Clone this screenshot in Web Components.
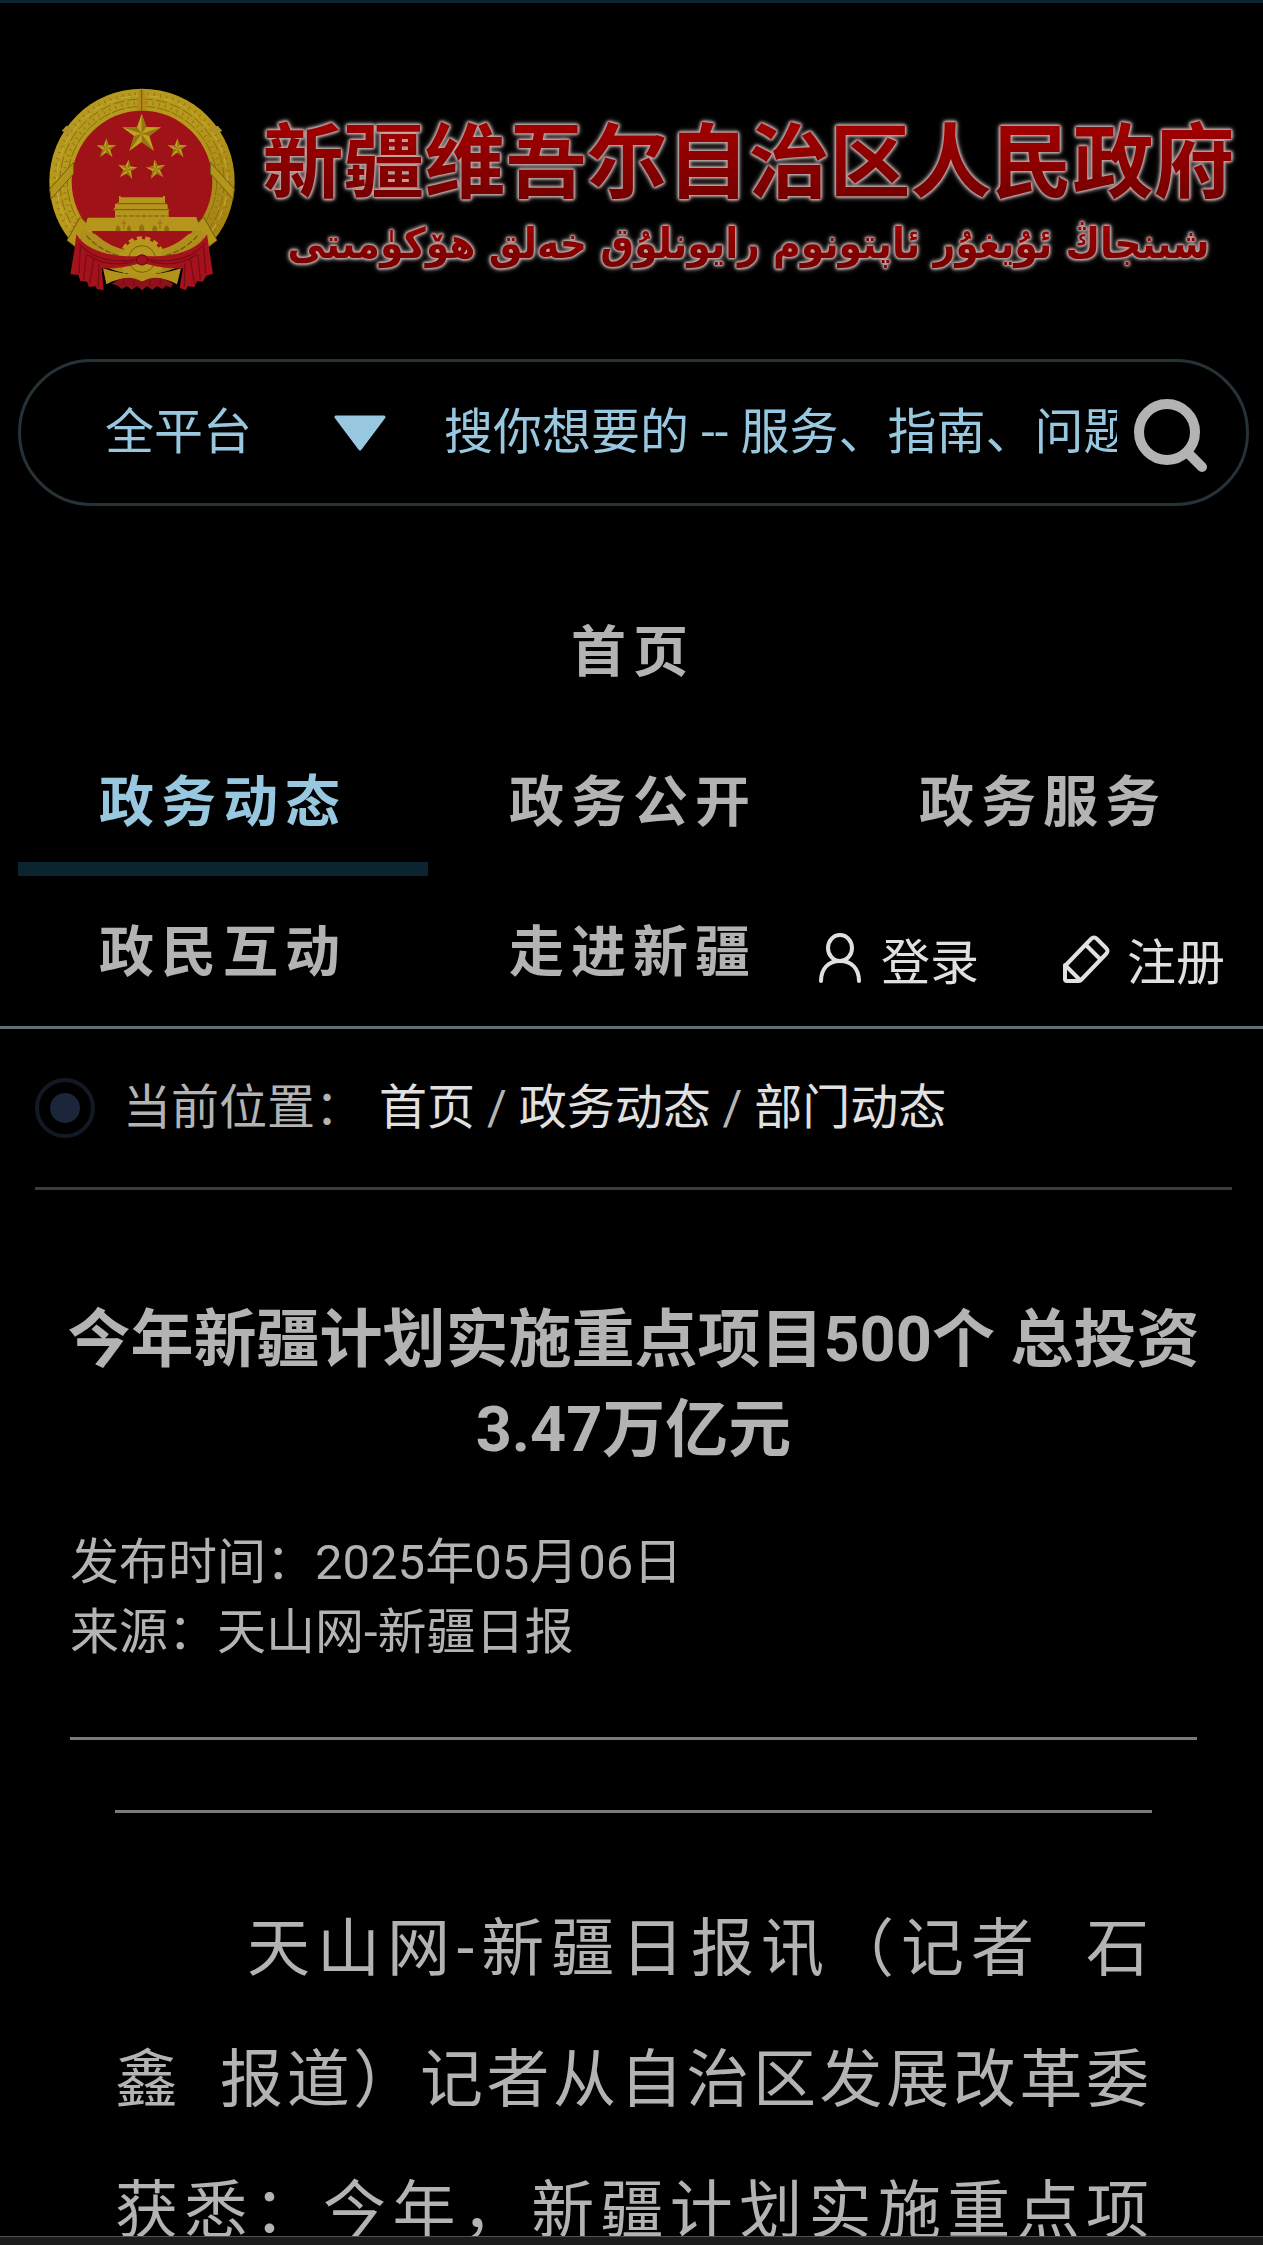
<!DOCTYPE html>
<html lang="zh-CN">
<head>
<meta charset="UTF-8">
<meta name="viewport" content="width=device-width, initial-scale=1">
<title>今年新疆计划实施重点项目500个 总投资3.47万亿元</title>
<style>
  body {
    margin: 0;
    background: #000;
    color: #b3b3b3;
    font-family: Roboto, "Noto Sans CJK SC", sans-serif;
    font-size: 49px;
  }
</style>
</head>
<body>
<portal-page>
  <site-header slot="header"></site-header>
  <site-search slot="header"></site-search>
  <site-nav slot="header">
    <nav-item wide>首页</nav-item>
    <nav-item active>政务动态</nav-item>
    <nav-item>政务公开</nav-item>
    <nav-item>政务服务</nav-item>
    <nav-item>政民互动</nav-item>
    <nav-item>走进新疆</nav-item>
    <user-links></user-links>
  </site-nav>
  <bread-crumb slot="header"></bread-crumb>
  <news-article>
    <span slot="title">今年新疆计划实施重点项目500个 总投资3.47万亿元</span>
    <span slot="date">发布时间：2025年05月06日</span>
    <span slot="source">来源：天山网-新疆日报</span>
    <span slot="body">天山网-新疆日报讯（记者&nbsp;&nbsp;石鑫&nbsp;&nbsp;报道）记者从自治区发展改革委获悉：今年，新疆计划实施重点项</span>
  </news-article>
</portal-page>

<script>
class PortalPage extends HTMLElement {
  connectedCallback() {
    this.attachShadow({ mode: 'open' });
    this.shadowRoot.innerHTML = `
      <style>
        :host {
          display: flex;
          flex-direction: column;
          height: 100vh;
          box-sizing: border-box;
          border-top: 3px solid #0c2630;
        }
        header { flex: none; }
        main {
          flex: 1;
          min-height: 0;
          overflow: hidden;
        }
        .toolbar {
          flex: none;
          height: 8px;
          background: #1c1c1c;
          border-top: 1px solid #505050;
        }
      </style>
      <header><slot name="header"></slot></header>
      <main><slot></slot></main>
      <div class="toolbar"></div>
    `;
  }
}

class SiteHeader extends HTMLElement {
  connectedCallback() {
    this.attachShadow({ mode: 'open' });
    this.shadowRoot.innerHTML = `
      <style>
        :host { display: block; }
        a {
          display: flex;
          align-items: center;
          gap: 25px;
          padding: 84px 28px 67px 47px;
          text-decoration: none;
        }
        svg { flex: none; width: 190px; height: 205px; }
        .names { flex: 1; padding-top: 18px; text-align: center; white-space: nowrap; }
        .zh, .ug {
          display: block;
          color: transparent;
          background-clip: text;
          -webkit-background-clip: text;
          filter: drop-shadow(0 0 1px #c8b0b0) drop-shadow(0 0 1px #b8a2a2) drop-shadow(0 0 1px #a89696) drop-shadow(0 0 2px #807676);
        }
        .zh {
          font-size: 81px;
          font-weight: 700;
          line-height: 90px;
          background-image: linear-gradient(#a00000 10%, #740000 90%);
        }
        .ug {
          font-family: "DejaVu Sans Condensed", "DejaVu Sans", sans-serif;
          font-size: 42px;
          font-weight: 700;
          line-height: 70px;
          background-image: linear-gradient(#a00000 20%, #780000 80%);
        }
      </style>
      <a href="#" aria-label="新疆维吾尔自治区人民政府">
        <svg viewBox="50 50 570 615" aria-hidden="true">
          <defs>
            <linearGradient id="gold" x1="0" y1="0" x2="1" y2="1">
              <stop offset="0" stop-color="#b39a20"/>
              <stop offset=".5" stop-color="#b8981a"/>
              <stop offset="1" stop-color="#9c7a10"/>
            </linearGradient>
            <polygon id="star" points="0,-60 14,-20 58,-19 23,7 37,52 0,25 -37,52 -23,7 -58,-19 -14,-20"/>
            <path id="facets" d="M0 0V-60L14-20ZM0 0 58-19 23 7ZM0 0 37 52 0 25ZM0 0-37 52-23 7ZM0 0-58-19-14-20Z"/>
          </defs>
          <!-- wreath -->
          <ellipse cx="335" cy="334" rx="278" ry="279" fill="url(#gold)"/>
          <g fill="none" stroke="#8a6d10" stroke-width="3">
            <ellipse cx="335" cy="334" rx="246" ry="248" stroke-dasharray="34 9"/>
            <ellipse cx="335" cy="334" rx="224" ry="226" stroke-dasharray="40 6"/>
          </g>
          <g fill="none" stroke="#947614" stroke-width="10" stroke-dasharray="3 16">
            <ellipse cx="335" cy="334" rx="262" ry="264"/>
            <ellipse cx="335" cy="334" rx="234" ry="237"/>
          </g>
          <g fill="none" stroke="#cbb038" stroke-width="3" stroke-dasharray="30 14">
            <ellipse cx="335" cy="334" rx="256" ry="258"/>
          </g>
          <path d="M326 58 318 124H352L342 58Z" fill="#b28a18"/>
          <path d="M334 58V122" stroke="#75570c" stroke-width="3"/>
          <path d="M94 182 108 166 128 172 118 190ZM576 182 562 166 542 172 552 190Z" fill="#b0922a"/>
          <!-- red field -->
          <ellipse cx="335" cy="334" rx="211" ry="213" fill="#9f1218"/>
          <!-- ties over the wreath -->
          <path d="M58 356 130 276V310L62 386ZM612 356 540 276V310L608 386Z" fill="#b39619" stroke="#715a0c" stroke-width="3"/>
          <path d="M110 510 150 440 178 468 136 530ZM560 510 520 440 492 468 534 530Z" fill="#b39619" stroke="#715a0c" stroke-width="3"/>
          <!-- stars -->
          <g fill="#c0a21c">
            <use href="#star" x="334" y="190"/>
            <use href="#star" transform="translate(228 234) scale(.5)"/>
            <use href="#star" transform="translate(441 234) scale(.5)"/>
            <use href="#star" transform="translate(291 297) rotate(8) scale(.5)"/>
            <use href="#star" transform="translate(377 297) rotate(-8) scale(.5)"/>
          </g>
          <g fill="#937414">
            <use href="#facets" x="334" y="190"/>
            <use href="#facets" transform="translate(228 234) scale(.5)"/>
            <use href="#facets" transform="translate(441 234) scale(.5)"/>
            <use href="#facets" transform="translate(291 297) rotate(8) scale(.5)"/>
            <use href="#facets" transform="translate(377 297) rotate(-8) scale(.5)"/>
          </g>
          <!-- gate -->
          <path d="M266 377H271V381H398V377H404V398L412 403V414L420 420H415V440H498L512 482H160L172 442H254V420H248L254 410V402L266 396Z" fill="#b5951b"/>
          <path d="M262 400H408M252 418H418" stroke="#75590e" stroke-width="3"/>
          <path d="M258 437H412" stroke="#8c6d12" stroke-width="4" stroke-dasharray="14 5"/>
          <path d="M256 482V474Q263 456 270 474V482ZM290 482V474Q296 456 302 474V482ZM326 482V472Q334 452 342 472V482ZM366 482V474Q373 456 380 474V482ZM402 482V474Q409 456 416 474V482Z" fill="#8f7013"/>
          <path d="M281 448V476M274 458H288M389 448V476M382 458H396" stroke="#8f7013" stroke-width="3"/>
          <path d="M184 486H486Q450 534 335 536 222 534 184 486Z" fill="#9f1218"/>
          <!-- grain below the gate -->
          <path d="M158 478 196 492Q236 530 290 540V578Q205 568 146 496ZM512 478 474 492Q434 530 380 540V578Q465 568 524 496Z" fill="#ae8f1c"/>
          <path d="M168 496Q215 548 286 560M502 496Q455 548 384 560" fill="none" stroke="#755a0e" stroke-width="4" stroke-dasharray="18 6"/>
          <!-- cog wheel -->
          <circle cx="335" cy="566" r="60" fill="#b5971c"/>
          <circle cx="335" cy="566" r="62" fill="none" stroke="#b5971c" stroke-width="13" stroke-dasharray="15 10"/>
          <circle cx="335" cy="566" r="40" fill="none" stroke="#7b5f0e" stroke-width="3"/>
          <path d="M218 594Q270 612 335 614 400 612 452 594L440 642Q388 612 335 634 282 612 228 642Z" fill="#b3921b"/>
          <!-- drapery -->
          <path d="M244 640Q290 608 335 634 380 608 428 640L422 652 408 646 396 656 380 648 366 658 350 648 335 660 320 648 304 658 290 648 274 656 262 646Z" fill="#8e1018"/>
          <path d="M138 492Q180 560 318 558L335 552 352 558Q490 560 530 492L537 540 548 610 528 616 518 634 500 632 492 650 472 648 466 660 448 652 458 594Q400 596 346 580L335 582 324 580Q270 596 214 594L220 660 200 656 196 648 176 650 170 634 150 632 144 614 120 612 132 540Z" fill="#a5121c"/>
          <path d="M150 530 146 610M168 552 160 628M190 566 178 640M206 580 204 650M520 530 526 610M502 552 510 628M480 566 492 640M464 580 462 650M146 520Q205 586 318 568M524 520Q465 586 352 568M170 552Q230 594 310 574M500 552Q440 594 360 574M280 628V646M310 628V648M360 628V648M390 628V646" fill="none" stroke="#780c14" stroke-width="4"/>
          <ellipse cx="335" cy="569" rx="17" ry="15" fill="#9c121b" stroke="#64080f" stroke-width="3"/>
        </svg>
        <span class="names">
          <span class="zh">新疆维吾尔自治区人民政府</span>
          <span class="ug" lang="ug" dir="rtl">شىنجاڭ ئۇيغۇر ئاپتونوم رايونلۇق خەلق ھۆكۈمىتى</span>
        </span>
      </a>
    `;
  }
}

class SiteSearch extends HTMLElement {
  connectedCallback() {
    this.attachShadow({ mode: 'open' });
    this.shadowRoot.innerHTML = `
      <style>
        :host { display: block; margin: 0 14px 0 18px; }
        form {
          display: flex;
          align-items: center;
          height: 141px;
          border: 3px solid #263238;
          border-radius: 74px;
        }
        select, input, button {
          appearance: none;
          margin: 0;
          padding: 0;
          border: 0;
          outline: 0;
          background: none;
          color: #98c8e0;
          font: inherit;
        }
        .scope {
          display: grid;
          align-items: center;
          width: 281px;
          margin: 0 58px 0 84px;
        }
        select, .arrow { grid-area: 1 / 1; }
        .arrow {
          justify-self: end;
          width: 52px;
          height: 36px;
          pointer-events: none;
        }
        input {
          flex: 1;
          min-width: 0;
          height: 72px;
        }
        input::placeholder { color: #98c8e0; opacity: 1; }
        button {
          display: flex;
          margin: 4px 39px 0 16px;
        }
        button svg { width: 74px; height: 76px; }
      </style>
      <form role="search" onsubmit="return false">
        <div class="scope">
          <select aria-label="搜索范围"><option>全平台</option></select>
          <svg class="arrow" viewBox="0 0 52 36" aria-hidden="true">
            <path d="M2 2H50L26 34Z" fill="#98c8e0" stroke="#98c8e0" stroke-width="3" stroke-linejoin="round"/>
          </svg>
        </div>
        <input type="text" aria-label="搜索" placeholder="搜你想要的 -- 服务、指南、问题">
        <button aria-label="搜索">
          <svg viewBox="0 0 74 76" fill="none" stroke="#b3b3b3" stroke-width="10" stroke-linecap="round" aria-hidden="true">
            <circle cx="34" cy="35" r="28"/>
            <path d="M55 56 69 70"/>
          </svg>
        </button>
      </form>
    `;
  }
}

class SiteNav extends HTMLElement {
  connectedCallback() {
    this.attachShadow({ mode: 'open' });
    this.shadowRoot.innerHTML = `
      <style>
        :host {
          display: block;
          margin-top: 70px;
          padding: 0 15px 0 18px;
          border-bottom: 3px solid #607079;
        }
        nav {
          display: grid;
          grid-template-columns: repeat(3, minmax(0, 1fr));
          grid-auto-rows: 150px;
        }
      </style>
      <nav><slot></slot></nav>
    `;
  }
}

class NavItem extends HTMLElement {
  connectedCallback() {
    this.attachShadow({ mode: 'open' });
    this.shadowRoot.innerHTML = `
      <style>
        :host { display: flex; }
        :host([wide]) { grid-column: 1 / -1; }
        a {
          flex: 1;
          box-sizing: border-box;
          border-bottom: 14px solid transparent;
          padding-top: 16px;
          color: #b3b3b3;
          font-size: 55px;
          font-weight: 700;
          line-height: 120px;
          letter-spacing: 7px;
          text-align: center;
          text-decoration: none;
          white-space: nowrap;
        }
        :host([active]) a { color: #98c8e0; border-color: #0a252f; }
      </style>
      <a href="#"><slot></slot></a>
    `;
  }
}

class UserLinks extends HTMLElement {
  connectedCallback() {
    this.attachShadow({ mode: 'open' });
    this.shadowRoot.innerHTML = `
      <style>
        :host {
          display: flex;
          align-items: center;
          justify-content: flex-end;
          gap: 83px;
          padding: 25px 23px 0 0;
        }
        a {
          display: flex;
          align-items: center;
          gap: 17px;
          color: #e0e0e0;
          line-height: 72px;
          text-decoration: none;
          white-space: nowrap;
        }
        svg { width: 48px; height: 52px; margin-bottom: 10px; }
      </style>
      <a href="#">
        <svg viewBox="0 0 48 52" fill="none" stroke="#e0e0e0" stroke-width="4" stroke-linecap="round" aria-hidden="true">
          <ellipse cx="24" cy="15" rx="12" ry="13"/>
          <path d="M5 48C5 36 12 28 24 28S43 36 43 48"/>
        </svg>
        登录
      </a>
      <a href="#">
        <svg viewBox="0 0 48 52" fill="none" stroke="#e0e0e0" stroke-width="4" stroke-linejoin="round" stroke-linecap="round" aria-hidden="true">
          <path d="M3 33 29 6Q32 3 35 6L44 15Q47 18 44 21L19 47Q18 48 16 48H5Q3 48 3 46ZM3 32 18 47M24 12 38 26"/>
        </svg>
        注册
      </a>
    `;
  }
}

class BreadCrumb extends HTMLElement {
  connectedCallback() {
    this.attachShadow({ mode: 'open' });
    this.shadowRoot.innerHTML = `
      <style>
        :host { display: block; margin: 0 31px 0 35px; }
        nav {
          display: flex;
          align-items: center;
          height: 158px;
          border-bottom: 3px solid #3c3c3c;
          font-size: 48px;
          line-height: 74px;
          white-space: nowrap;
        }
        svg { width: 60px; height: 60px; margin-right: 28px; }
        .label { margin-right: 16px; }
        a { color: #e0e0e0; text-decoration: none; }
      </style>
      <nav aria-label="当前位置">
        <svg viewBox="0 0 60 60" aria-hidden="true">
          <circle cx="30" cy="30" r="28" fill="none" stroke="#121924" stroke-width="4"/>
          <circle cx="30" cy="30" r="15" fill="#1b263a"/>
        </svg>
        <span class="label">当前位置：</span>
        <span><a href="#">首页</a> / <a href="#">政务动态</a> / <a href="#">部门动态</a></span>
      </nav>
    `;
  }
}

class NewsArticle extends HTMLElement {
  connectedCallback() {
    this.attachShadow({ mode: 'open' });
    this.shadowRoot.innerHTML = `
      <style>
        :host { display: block; padding: 105px 66px 0 70px; }
        h1 {
          margin: 0 -8px 53px;
          font-size: 63px;
          font-weight: 700;
          line-height: 90px;
          text-align: center;
        }
        .meta {
          padding-bottom: 69px;
          border-bottom: 3px solid #7a7a7a;
          line-height: 70px;
        }
        .meta div { white-space: nowrap; }
        .content {
          margin: 70px 45px 0;
          padding-top: 70px;
          border-top: 3px solid #7a7a7a;
        }
        p {
          margin: 0;
          font-size: 63px;
          line-height: 131px;
          letter-spacing: 3px;
          text-indent: 132px;
          text-align: justify;
          text-align-last: justify;
        }
      </style>
      <article>
        <h1><slot name="title"></slot></h1>
        <div class="meta">
          <div><slot name="date"></slot></div>
          <div><slot name="source"></slot></div>
        </div>
        <div class="content">
          <p><slot name="body"></slot></p>
        </div>
      </article>
    `;
  }
}

customElements.define('portal-page', PortalPage);
customElements.define('site-header', SiteHeader);
customElements.define('site-search', SiteSearch);
customElements.define('site-nav', SiteNav);
customElements.define('nav-item', NavItem);
customElements.define('user-links', UserLinks);
customElements.define('bread-crumb', BreadCrumb);
customElements.define('news-article', NewsArticle);
</script>
</body>
</html>
